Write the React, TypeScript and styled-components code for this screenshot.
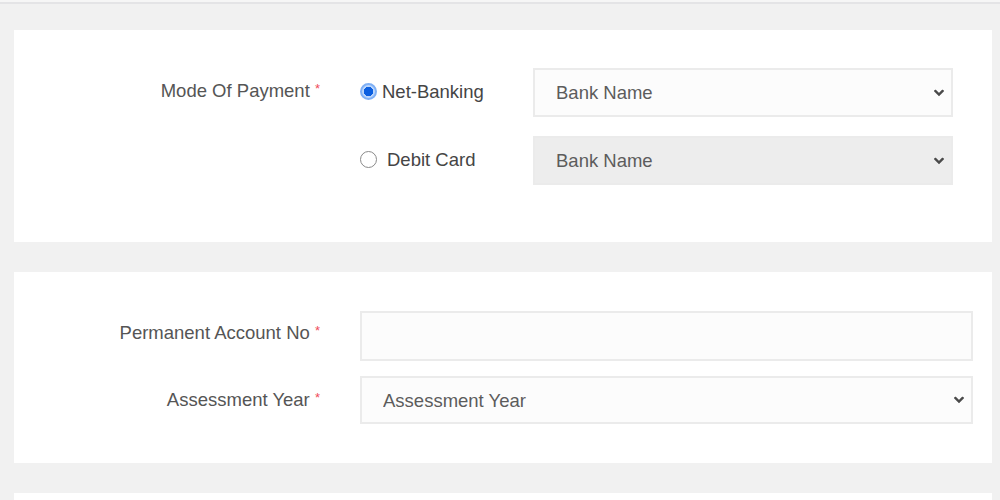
import React from "react";
import styled, { createGlobalStyle } from "styled-components";

const GlobalStyle = createGlobalStyle`
  html, body {
    margin: 0;
    padding: 0;
    background: #f1f1f1;
    font-family: "Liberation Sans", Arial, sans-serif;
    overflow: hidden;
  }
`;

const banks = ["Bank Name", "State Bank of India", "HDFC Bank", "ICICI Bank"];

export default function App() {
  const [mode, setMode] = React.useState<"net" | "debit">("net");

  return (
    <>
      <GlobalStyle />
      <TopRule />
      <Page>
        <Card $height={212}>
          <PaymentGrid>
            <Label>
              Mode Of Payment <Required>*</Required>
            </Label>
            <RadioOption>
              <Radio
                type="radio"
                name="mode"
                checked={mode === "net"}
                onChange={() => setMode("net")}
              />
              Net-Banking
            </RadioOption>
            <SelectWrap>
              <Select disabled={mode !== "net"} defaultValue="Bank Name">
                {banks.map((b) => (
                  <option key={b}>{b}</option>
                ))}
              </Select>
              <Chevron />
            </SelectWrap>

            <span />
            <RadioOption $spaced>
              <Radio
                type="radio"
                name="mode"
                checked={mode === "debit"}
                onChange={() => setMode("debit")}
              />
              Debit Card
            </RadioOption>
            <SelectWrap>
              <Select
                $muted={mode !== "debit"}
                disabled={mode !== "debit"}
                defaultValue="Bank Name"
              >
                {banks.map((b) => (
                  <option key={b}>{b}</option>
                ))}
              </Select>
              <Chevron />
            </SelectWrap>
          </PaymentGrid>
        </Card>

        <Card $height={191}>
          <DetailsGrid>
            <Label $offset={9}>
              Permanent Account No <Required>*</Required>
            </Label>
            <TextInput type="text" />

            <Label $offset={11}>
              Assessment Year <Required>*</Required>
            </Label>
            <SelectWrap>
              <Select defaultValue="Assessment Year">
                <option>Assessment Year</option>
                <option>2023-24</option>
                <option>2024-25</option>
              </Select>
              <Chevron />
            </SelectWrap>
          </DetailsGrid>
        </Card>

        <Card $height={8} />
      </Page>
    </>
  );
}

function Chevron() {
  return (
    <ChevronIcon width="10" height="7" viewBox="0 0 10 7" aria-hidden>
      <path
        d="M1.5 1.5 L5 5 L8.5 1.5"
        fill="none"
        stroke="#4a4a4a"
        strokeWidth="2.4"
        strokeLinecap="square"
      />
    </ChevronIcon>
  );
}

const TopRule = styled.div`
  height: 2px;
  background: #f6f6f6;
  border-bottom: 2px solid #e4e4e6;
`;

const Page = styled.div`
  display: flex;
  flex-direction: column;
  gap: 30px;
  padding: 26px 8px 0 14px;
`;

const Card = styled.section<{ $height: number }>`
  height: ${({ $height }) => $height}px;
  background: #ffffff;
  box-sizing: border-box;
`;

const PaymentGrid = styled.div`
  display: grid;
  grid-template-columns: 306px 213px 420px;
  grid-auto-rows: 49px;
  row-gap: 19px;
  padding-top: 38px;
`;

const DetailsGrid = styled.div`
  display: grid;
  grid-template-columns: 306px 613px;
  grid-template-rows: 50px 48px;
  column-gap: 40px;
  row-gap: 15px;
  padding-top: 39px;
`;

const Label = styled.label<{ $offset?: number }>`
  align-self: start;
  padding-top: ${({ $offset }) => $offset ?? 10}px;
  text-align: right;
  font-size: 18.5px;
  line-height: 22px;
  color: #555555;
  white-space: nowrap;
`;

const Required = styled.span`
  color: #ef4b5a;
  font-size: 13px;
  vertical-align: 4px;
`;

const RadioOption = styled.label<{ $spaced?: boolean }>`
  display: flex;
  align-items: center;
  gap: ${({ $spaced }) => ($spaced ? 10 : 5)}px;
  margin-left: 40px;
  margin-top: -2px;
  font-size: 18.5px;
  color: #454545;
  cursor: pointer;
  white-space: nowrap;
`;

const Radio = styled.input`
  appearance: none;
  width: 17px;
  height: 17px;
  margin: 0;
  border-radius: 50%;
  border: 1.5px solid #8a8a8a;
  background: #fff;
  box-sizing: border-box;
  flex-shrink: 0;
  cursor: pointer;

  &:checked {
    border: 2px solid #7fb0f5;
    background: radial-gradient(circle, #0b5fe0 0 4.5px, #bcd6fb 5px);
  }
`;

const SelectWrap = styled.div`
  position: relative;
  display: flex;
`;

const Select = styled.select<{ $muted?: boolean }>`
  appearance: none;
  width: 100%;
  margin: 0;
  padding: 0 40px 0 21px;
  border: 2px solid #ebebeb;
  border-radius: 0;
  background: ${({ $muted }) => ($muted ? "#ededed" : "#fcfcfc")};
  font-family: "Liberation Sans", Arial, sans-serif;
  font-size: 18.5px;
  color: #5c5c5c;
  opacity: 1;

  &:disabled {
    color: #5c5c5c;
  }
`;

const ChevronIcon = styled.svg`
  position: absolute;
  right: 9px;
  top: 50%;
  transform: translateY(-50%);
  pointer-events: none;
`;

const TextInput = styled.input`
  margin: 0;
  padding: 0 21px;
  border: 2px solid #ebebeb;
  background: #fcfcfc;
  font-family: "Liberation Sans", Arial, sans-serif;
  font-size: 18.5px;
  color: #555;
  box-sizing: border-box;
  outline: none;
`;
